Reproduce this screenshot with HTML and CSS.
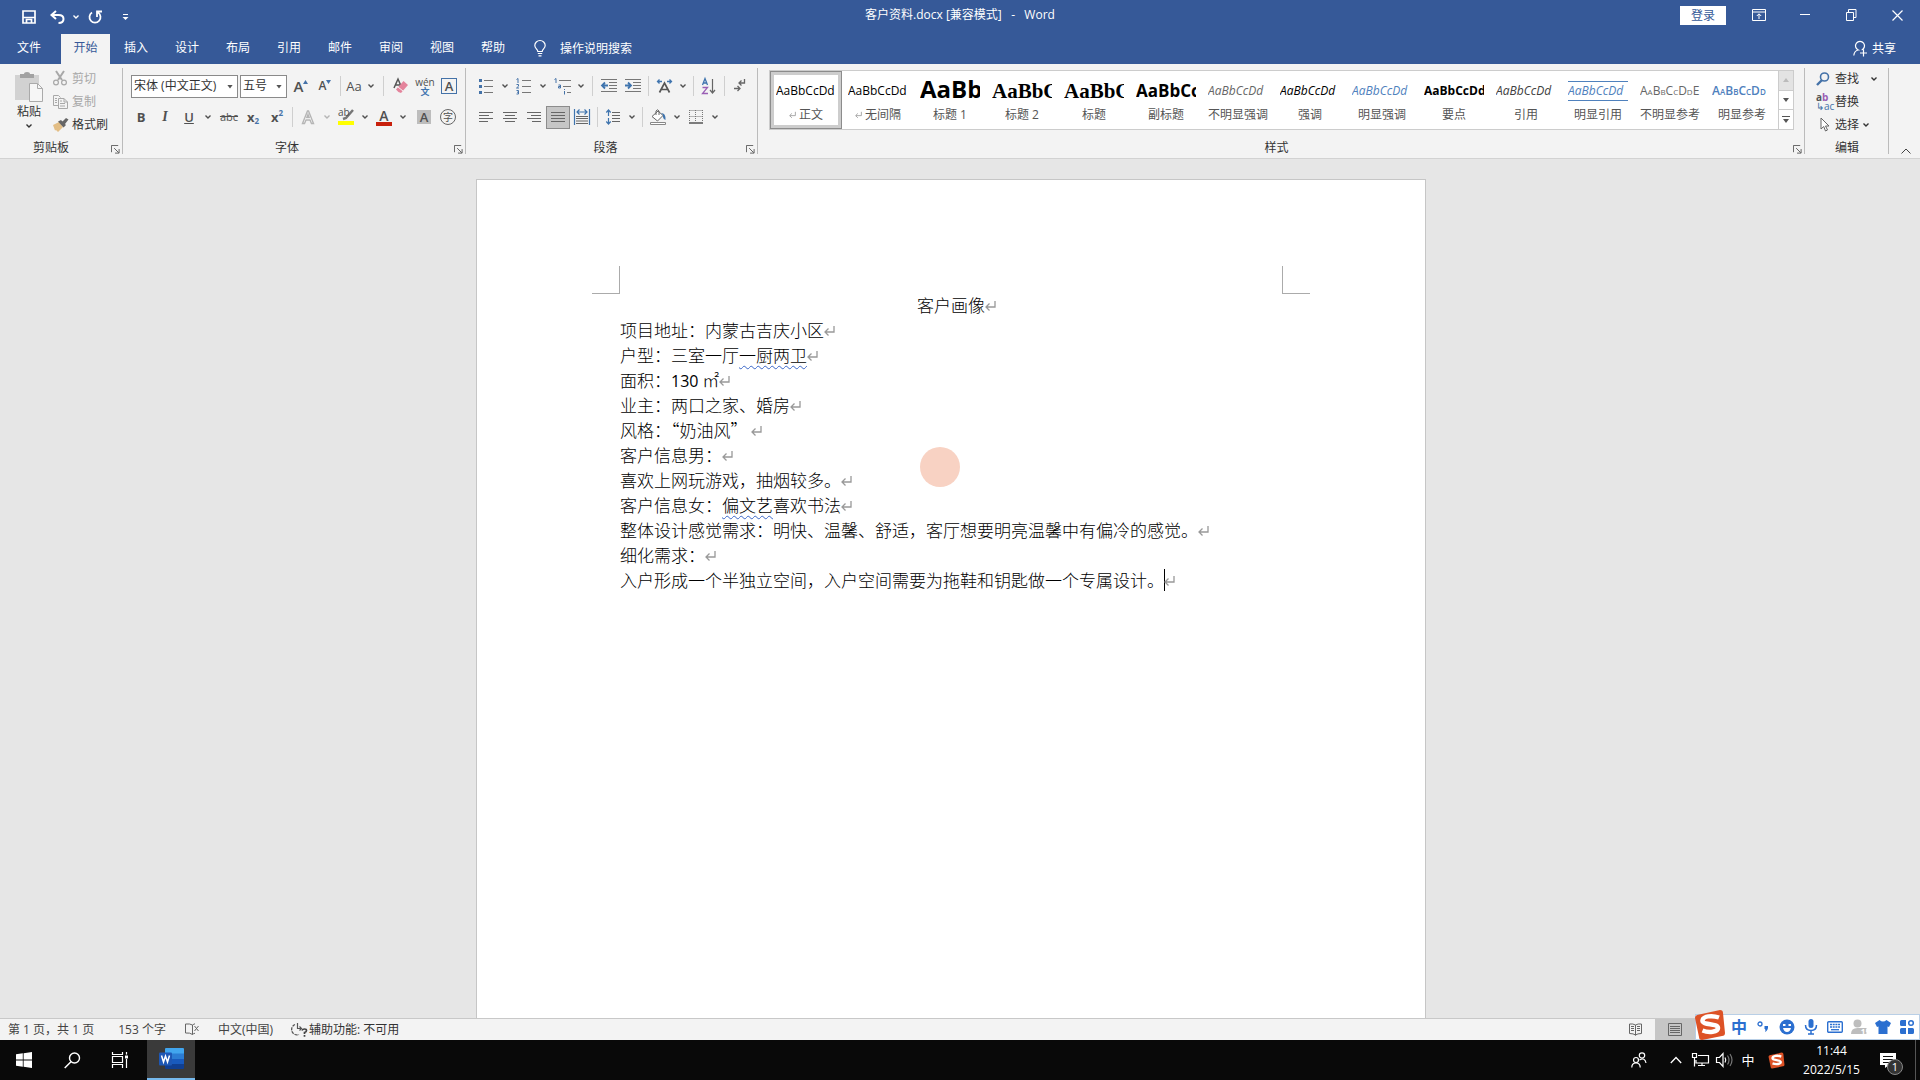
FILE: index.html
```
<!DOCTYPE html>
<html lang="zh-CN">
<head>
<meta charset="utf-8">
<title>客户资料.docx [兼容模式] - Word</title>
<link rel="stylesheet" href="styles.css">
</head>
<body>
<svg class="sprite" aria-hidden="true">
  <symbol id="chev" viewBox="0 0 8 8"><path d="M1.5 2.500 4 5l2.500-2.500" fill="none" stroke="currentColor" stroke-width="1.400"/></symbol>
  <symbol id="launch" viewBox="0 0 10 10"><path d="M.5 8V.5H8M3.500 3.500l5 5M9 4.500V9H4.500" fill="none" stroke="#555"/></symbol>
  <symbol id="ret" viewBox="0 0 11 12"><path d="M10 1v6H1.500M4.500 3.500 1 7l3.500 3.500" fill="none" stroke="#999" stroke-width="1.300"/></symbol>
  <symbol id="sogou" viewBox="0 0 32 32"><path d="M3 6 26 1q3 0 3 3l2 20q0 3-3 3L8 31q-3 0-3-3L1 9q0-2 2-3z" fill="#dd5226"/><path d="M25 8.500C18 6 9 7 8.500 11.500 8 16.500 24 14 24 19c0 4-9 5-15.500 2.500" fill="none" stroke="#fff" stroke-width="4.500"/></symbol>
</svg>
<div class="app">
<header class="titlebar">
  <div class="qat">
    <button class="q26" aria-label="保存"><svg width="14" height="14"><path d="M1 1h12v12H1z M1 7.500h12 M4.500 13V9.500h5V13" fill="none" stroke="#fff" stroke-width="1.700"/></svg></button>
    <button class="q26" aria-label="撤消"><svg width="15" height="14"><path d="M6 1 1.500 5 6 9M2 5h6.500c3 0 5 1.500 5 4s-2 4-5 4" fill="none" stroke="#fff" stroke-width="2"/></svg></button>
    <button class="q12" aria-label="撤消选项"><svg width="8" height="8"><use href="#chev"/></svg></button>
    <button class="q26" aria-label="重复"><svg width="14" height="14"><path d="M4 2.500a5.500 5.500 0 1 0 6 0M9 7V1.500h5" fill="none" stroke="#fff" stroke-width="1.800"/></svg></button>
    <button class="q32" aria-label="自定义快速访问工具栏"><svg width="7" height="8"><path d="M1 1.500h5" stroke="#fff"/><path d="M.5 4h6L3.500 7z" fill="#fff"/></svg></button>
  </div>
  <h1 class="doctitle">客户资料.docx [兼容模式]&nbsp;&nbsp; -&nbsp;&nbsp; Word</h1>
  <div class="wincontrols">
    <button class="login">登录</button>
    <button class="win" aria-label="功能区显示选项"><svg width="14" height="12"><path d="M.5.5h13v11H.5zM.5 3h13M7 10V5M4.800 7 7 4.800 9.200 7" fill="none" stroke="#fff"/></svg></button>
    <button class="win" aria-label="最小化"><svg width="10" height="10"><path d="M0 4.500h10" stroke="#fff"/></svg></button>
    <button class="win" aria-label="还原"><svg width="11" height="12"><path d="M.5 3.500h7v8h-7zM2.500 3V.5H10v8H8" fill="none" stroke="#fff"/></svg></button>
    <button class="win" aria-label="关闭"><svg width="11" height="11"><path d="M.5.5l10 10M10.500.5l-10 10" stroke="#fff" stroke-width="1.200"/></svg></button>
  </div>
</header>
<nav class="tabs">
  <button class="tab file">文件</button>
  <button class="tab active">开始</button>
  <button class="tab">插入</button>
  <button class="tab">设计</button>
  <button class="tab">布局</button>
  <button class="tab">引用</button>
  <button class="tab">邮件</button>
  <button class="tab">审阅</button>
  <button class="tab">视图</button>
  <button class="tab">帮助</button>
  <button class="tell"><svg width="12" height="17"><path d="M3.800 11.500C3.800 9 .8 8.500.8 5.500a5.200 5 0 0 1 10.400 0c0 3-3 3.500-3 6zM3.800 13.500h4.400M4.500 15.800h3" fill="none" stroke="#fff" stroke-width="1.200"/></svg>操作说明搜索</button>
  <button class="share"><svg width="14" height="17"><path d="M.8 15.500c.3-3 2-5 4.500-5.500a4.500 4.500 0 1 1 3.400 0M10.500 9.500v7M7 13h7" fill="none" stroke="#fff" stroke-width="1.200"/></svg>共享</button>
</nav>

<section class="ribbon">
  <div class="group clip">
    <div class="cliprow">
      <button class="paste">
        <svg width="28" height="31"><path d="M0 3h24v12h-8v13H0z" fill="#d2d2d2"/><path d="M5 5V2h4q0-2 3-2t3 2h4v4H5z" fill="#a2a2a2"/><path d="M14.500 11.500h8l5 5v13h-13z" fill="#f6f6f6" stroke="#aaa"/><path d="M22.500 11.500v5h5" fill="none" stroke="#aaa"/></svg>
        <span>粘贴</span>
        <svg width="8" height="8"><use href="#chev"/></svg>
      </button>
      <div class="cmds">
        <button class="cmd off"><svg width="14" height="15"><path d="M3 0l6 9M11 0 5 9" stroke="#a8a8a8" stroke-width="2"/><circle cx="3" cy="11.500" r="2.400" fill="none" stroke="#a8a8a8" stroke-width="1.200"/><circle cx="11" cy="11.500" r="2.400" fill="none" stroke="#a8a8a8" stroke-width="1.200"/></svg>剪切</button>
        <button class="cmd off"><svg width="15" height="14"><path d="M5 10.500H.5v-10h5l2 2M5.500 3.500h5.500l3.500 3.500v6.500h-9zM11 3.500V7h3.500M2 3.500h2M2 5.500h2M2 7.500h2M7 6h2M7 8.500h5M7 11h5" fill="none" stroke="#a8a8a8"/></svg>复制</button>
        <button class="cmd"><svg width="16" height="14"><path d="M0 7 6 4l4 5-5 5-2-2-1 .5z" fill="#e3be85"/><path d="M5 3.500 8 2l5 5-2.500 2.500zM9 4l4-4 2.500 1.500L12 6z" fill="#666"/></svg>格式刷</button>
      </div>
    </div>
    <div class="caption"><span>剪贴板</span><button class="launcher" aria-label="剪贴板设置"><svg width="9" height="9"><use href="#launch"/></svg></button></div>
  </div>

  <div class="group font">
    <div class="tools">
      <label class="combo wide"><select aria-label="字体"><option>宋体 (中文正文)</option></select></label>
      <label class="combo slim"><select aria-label="字号"><option>五号</option></select></label>
      <button class="ib big" aria-label="增大字号">A<svg width="5" height="14"><path d="M0 5 2.500 1 5 5z" fill="#4472a8"/></svg></button>
      <button class="ib med" aria-label="减小字号">A<svg width="5" height="14"><path d="M0 1h5L2.500 5z" fill="#4472a8"/></svg></button>
      <i class="sep"></i>
      <button class="ib20">Aa</button><button class="drop" aria-label="更改大小写选项"><svg width="8" height="8"><use href="#chev"/></svg></button>
      <i class="sep s11"></i>
      <button class="ib" aria-label="清除格式"><svg width="16" height="16"><path d="M1 10 5 1l3 7M2.500 7H7" fill="none" stroke="#555" stroke-width="1.500"/><path d="M3 11.500 10.500 3 15 7 8 15q-3-.5-5-3.500z" fill="#e4849c"/><path d="M5 9l5 4" stroke="#f4f4f4"/></svg></button>
      <button class="ib pinyin"><span>wén</span><b>文</b></button>
      <button class="ib" aria-label="字符边框"><span class="boxed">A</span></button>
    </div>
    <div class="tools">
      <button class="ib bold">B</button>
      <button class="ib ital">I</button>
      <button class="ib und">U</button><button class="drop" aria-label="下划线选项"><svg width="8" height="8"><use href="#chev"/></svg></button>
      <i class="gap2"></i>
      <button class="ib strike">abc</button>
      <button class="ib script">x<sub>2</sub></button>
      <button class="ib script">x<sup>2</sup></button>
      <i class="sep"></i>
      <button class="ib" aria-label="文本效果"><svg width="14" height="15"><path d="M1.500 13.500 6.500 1h1l5 12.500h-2L9 10H5l-1.500 3.500zM5.800 7.500h2.400L7 4.500z" fill="#fff" stroke="#b5b5b5" stroke-width="1.400"/></svg></button><button class="drop dim" aria-label="文本效果选项"><svg width="8" height="8"><use href="#chev"/></svg></button>
      <button class="ib mark"><span>ab</span><svg width="16" height="17"><path d="M15 1 8 9l-3 1" fill="none" stroke="#777" stroke-width="2.500"/><path d="M0 12h16v4H0z" fill="#ffff00"/></svg></button><button class="drop" aria-label="突出显示颜色"><svg width="8" height="8"><use href="#chev"/></svg></button>
      <button class="ib"><span class="redbar">A</span></button><button class="drop" aria-label="字体颜色选项"><svg width="8" height="8"><use href="#chev"/></svg></button>
      <i class="gap2"></i>
      <button class="ib"><span class="shaded">A</span></button>
      <button class="ib"><span class="ring">字</span></button>
    </div>
    <div class="caption"><span>字体</span><button class="launcher" aria-label="字体设置"><svg width="9" height="9"><use href="#launch"/></svg></button></div>
  </div>

  <div class="group para">
    <div class="tools">
      <button class="ib" aria-label="项目符号"><svg width="14" height="16"><path d="M5 2.500h9M5 8.500h9M5 14.500h9" stroke="#777"/><path d="M0 1h3v3H0zM0 7h3v3H0zM0 13h3v3H0z" fill="#4472a8"/></svg></button><button class="drop" aria-label="项目符号选项"><svg width="8" height="8"><use href="#chev"/></svg></button>
      <button class="ib" aria-label="编号"><svg width="16" height="17"><path d="M6 2.500h9M6 8.500h9M6 14.500h9" stroke="#777"/><path d="M.5 1.500 2 .5V5M.5 6.500h2v1.700L.5 10H3M.5 12.500h2V16h-2M1 14.200h1.500" fill="none" stroke="#4472a8"/></svg></button><button class="drop" aria-label="编号选项"><svg width="8" height="8"><use href="#chev"/></svg></button>
      <button class="ib" aria-label="多级列表"><svg width="17" height="17"><path d="M5 2.500h12M9 8.500h8M13 14.500h4" stroke="#777"/><path d="M.5 1.500 2 .5V5M4.500 7h2v3h-2V8.500h2M10.500 13v3.500M10.500 11v1" fill="none" stroke="#4472a8"/></svg></button><button class="drop" aria-label="多级列表选项"><svg width="8" height="8"><use href="#chev"/></svg></button>
      <i class="sep s9"></i>
      <button class="ib" aria-label="减少缩进"><svg width="16" height="14"><path d="M0 .5h16M8 3.500h8M8 6.500h8M8 9.500h8M0 12.500h16" stroke="#777"/><path d="M7 6.500H1M4 3.500 1 6.500l3 3" fill="none" stroke="#3f74ae" stroke-width="1.800"/></svg></button>
      <button class="ib" aria-label="增加缩进"><svg width="16" height="14"><path d="M0 .5h16M8 3.500h8M8 6.500h8M8 9.500h8M0 12.500h16" stroke="#777"/><path d="M0 6.500h6M3 3.500l3 3-3 3" fill="none" stroke="#3f74ae" stroke-width="1.800"/></svg></button>
      <i class="sep"></i>
      <button class="ib" aria-label="中文版式"><svg width="17" height="14"><path d="M3.500 13.500 8.500 4l5 9.500M5.500 10.500h6" fill="none" stroke="#555" stroke-width="1.700"/><path d="M6 2.500H1.500M3.500.5l-2 2 2 2M11 2.500h4.500M13.500.5l2 2-2 2" fill="none" stroke="#3f74ae" stroke-width="1.300"/></svg></button><button class="drop" aria-label="中文版式选项"><svg width="8" height="8"><use href="#chev"/></svg></button>
      <i class="sep"></i>
      <button class="ib" aria-label="排序"><svg width="14" height="17"><path d="M.5 7 3 .5 5.500 7M1.500 5h3" fill="none" stroke="#3f74ae" stroke-width="1.300"/><path d="M.5 9.500h5l-5 6H6" fill="none" stroke="#9a5fb5" stroke-width="1.300"/><path d="M10.500 1v14M8 12l2.500 3 2.500-3" fill="none" stroke="#666" stroke-width="1.200"/></svg></button>
      <i class="sep"></i>
      <button class="ib" aria-label="显示编辑标记"><svg width="12" height="14"><path d="M10.500 0v4H5M7.500 1.500 5 4l2.500 2.500M0 9.500h6M3.500 7 6 9.500 3.500 12" fill="none" stroke="#666" stroke-width="1.300"/></svg></button>
    </div>
    <div class="tools">
      <button class="ib" aria-label="左对齐"><svg width="14" height="12"><path d="M0 1.500h14M0 4.500h10M0 7.500h14M0 10.500h9" stroke="#666"/></svg></button>
      <button class="ib" aria-label="居中"><svg width="14" height="12"><path d="M0 1.500h14M2 4.500h10M0 7.500h14M2 10.500h10" stroke="#666"/></svg></button>
      <button class="ib" aria-label="右对齐"><svg width="14" height="12"><path d="M0 1.500h14M4 4.500h10M0 7.500h14M5 10.500h9" stroke="#666"/></svg></button>
      <button class="ib on" aria-label="两端对齐"><svg width="14" height="12"><path d="M0 1.500h14M0 4.500h14M0 7.500h14M0 10.500h14" stroke="#666"/></svg></button>
      <button class="ib" aria-label="分散对齐"><svg width="16" height="16"><path d="M2 7.500h12M2 9.500h12M2 12h12M2 14.500h12" stroke="#666"/><path d="M.5 0v16M15.500 0v16M3 3h10M5.500.5 3 3l2.500 2.500M10.500.5 13 3l-2.500 2.500" fill="none" stroke="#3f74ae" stroke-width="1.200"/></svg></button>
      <i class="sep"></i>
      <button class="ib" aria-label="行距"><svg width="14" height="16"><path d="M6 3.500h8M6 6.500h8M6 9.500h8M6 12.500h8" stroke="#666"/><path d="M2.500 7V1M.3 3.500 2.500 1l2.200 2.500M2.500 9v6M.3 12.500 2.500 15l2.200-2.500" fill="none" stroke="#3f74ae" stroke-width="1.200"/></svg></button><button class="drop" aria-label="行距选项"><svg width="8" height="8"><use href="#chev"/></svg></button>
      <i class="sep"></i>
      <button class="ib" aria-label="底纹"><svg width="16" height="16"><path d="M2 7.500 8 2l5 4.500L7.500 12z" fill="#fff" stroke="#666"/><path d="M6 6V2q1.500-2.500 3 0v4" fill="none" stroke="#666"/><path d="M11 4q5 0 4.500 7-3-1-2.500-5z" fill="#3f74ae"/><path d="M.5 13.500h15v2H.5z" fill="#fff" stroke="#888"/></svg></button><button class="drop" aria-label="底纹选项"><svg width="8" height="8"><use href="#chev"/></svg></button>
      <button class="ib" aria-label="边框"><svg width="14" height="14"><path d="M.5.5h13M.5 6.500h13M.5 0v12M6.500 0v12M13.500 0v12" stroke="#777" stroke-dasharray="1 1"/><path d="M0 13h14" stroke="#555" stroke-width="1.500"/></svg></button><button class="drop" aria-label="边框选项"><svg width="8" height="8"><use href="#chev"/></svg></button>
    </div>
    <div class="caption"><span>段落</span><button class="launcher" aria-label="段落设置"><svg width="9" height="9"><use href="#launch"/></svg></button></div>
  </div>

  <div class="group styles">
    <div class="gallery">
      <button class="style sel"><span class="smp">AaBbCcDd</span><span class="nm"><svg width="7" height="8"><use href="#ret"/></svg>正文</span></button>
      <button class="style"><span class="smp">AaBbCcDd</span><span class="nm"><svg width="7" height="8"><use href="#ret"/></svg>无间隔</span></button>
      <button class="style"><span class="smp h1">AaBb</span><span class="nm">标题 1</span></button>
      <button class="style"><span class="smp h2">AaBbC</span><span class="nm">标题 2</span></button>
      <button class="style"><span class="smp h2">AaBbC</span><span class="nm">标题</span></button>
      <button class="style"><span class="smp h3">AaBbCc</span><span class="nm">副标题</span></button>
      <button class="style"><span class="smp it grey">AaBbCcDd</span><span class="nm">不明显强调</span></button>
      <button class="style"><span class="smp it">AaBbCcDd</span><span class="nm">强调</span></button>
      <button class="style"><span class="smp it blue">AaBbCcDd</span><span class="nm">明显强调</span></button>
      <button class="style"><span class="smp strong">AaBbCcDd</span><span class="nm">要点</span></button>
      <button class="style"><span class="smp it dark">AaBbCcDd</span><span class="nm">引用</span></button>
      <button class="style"><span class="smp it blue lined">AaBbCcDd</span><span class="nm">明显引用</span></button>
      <button class="style"><span class="smp caps grey">AaBbCcDdE</span><span class="nm">不明显参考</span></button>
      <button class="style"><span class="smp caps blue semi">AaBbCcDd</span><span class="nm">明显参考</span></button>
      <div class="scroller">
        <button disabled aria-label="上一行"><svg width="6" height="4"><path d="M0 4 3 0l3 4z" fill="#bbb"/></svg></button>
        <button aria-label="下一行"><svg width="6" height="4"><path d="M0 0h6L3 4z" fill="#555"/></svg></button>
        <button aria-label="其他样式"><svg width="8" height="8"><path d="M0 .5h8" stroke="#555"/><path d="M1 3h6L4 7z" fill="#555"/></svg></button>
      </div>
    </div>
    <div class="caption"><span>样式</span><button class="launcher" aria-label="样式设置"><svg width="9" height="9"><use href="#launch"/></svg></button></div>
  </div>

  <div class="group edit">
    <div class="cmds">
      <button class="cmd"><svg width="16" height="14"><circle cx="8.500" cy="5" r="4" fill="none" stroke="#4472a8" stroke-width="1.600"/><path d="M6 8 1 13" stroke="#4472a8" stroke-width="2.400"/></svg>查找<svg class="far" width="8" height="8"><use href="#chev"/></svg></button>
      <button class="cmd"><span class="swap"><b>a<i>b</i></b><em>↳ac</em></span>替换</button>
      <button class="cmd"><svg width="16" height="15"><path d="M5 1v11l2.700-2.500L9.500 14l2-1-2-4H13z" fill="#fff" stroke="#666"/></svg>选择<svg width="8" height="8"><use href="#chev"/></svg></button>
    </div>
    <div class="caption"><span>编辑</span></div>
  </div>
  <button class="collapse" aria-label="折叠功能区"><svg width="10" height="6"><path d="M.5 5.500 5 1l4.500 4.500" fill="none" stroke="#444"/></svg></button>
</section>

<main class="desk">
  <article class="page">
    <div class="corners"><i class="cl"></i><i class="cr"></i></div>
    <div class="body">
      <p class="mid">客户画像<svg class="ret" width="11" height="12"><use href="#ret"/></svg></p>
      <p>项目地址：内蒙古吉庆小区<svg class="ret" width="11" height="12"><use href="#ret"/></svg></p>
      <p>户型：三室一厅<span class="wavy">一厨两卫</span><svg class="ret" width="11" height="12"><use href="#ret"/></svg></p>
      <p>面积：<span class="num">130</span> ㎡<svg class="ret" width="11" height="12"><use href="#ret"/></svg></p>
      <p>业主：两口之家、婚房<svg class="ret" width="11" height="12"><use href="#ret"/></svg></p>
      <p>风格：“奶油风” <svg class="ret" width="11" height="12"><use href="#ret"/></svg></p>
      <p>客户信息男：<svg class="ret" width="11" height="12"><use href="#ret"/></svg></p>
      <p>喜欢上网玩游戏，抽烟较多。<svg class="ret" width="11" height="12"><use href="#ret"/></svg></p>
      <p>客户信息女：<span class="wavy">偏文艺</span>喜欢书法<svg class="ret" width="11" height="12"><use href="#ret"/></svg></p>
      <p>整体设计感觉需求：明快、温馨、舒适，客厅想要明亮温馨中有偏冷的感觉。<svg class="ret" width="11" height="12"><use href="#ret"/></svg></p>
      <p>细化需求：<svg class="ret" width="11" height="12"><use href="#ret"/></svg></p>
      <p>入户形成一个半独立空间，入户空间需要为拖鞋和钥匙做一个专属设计。<i class="caret"></i><svg class="ret" width="11" height="12"><use href="#ret"/></svg></p>
    </div>
    <i class="pointer"></i>
  </article>
</main>

<footer class="status">
  <span class="pages">第 1 页，共 1 页</span>
  <span class="words">153 个字</span>
  <button class="proof" aria-label="校对"><svg width="15" height="13"><path d="M7.500 2v9.500M7.500 2Q5 .5.500 1v9q4.500-.5 7 1.500 1-1 2.500-1.300M7.500 2Q9 1 10 .8M9.500 3l4 5M13.500 3l-4 5" fill="none" stroke="#666"/></svg></button>
  <span class="lang">中文(中国)</span>
  <button class="a11y"><svg width="17" height="14"><path d="M4 1.500a5 5 0 1 0 4 10" fill="none" stroke="#555" stroke-width="1.300" stroke-dasharray="3 1"/><path d="M6.500 0v5.500h4M8.500 3.500l2 2-2 2" fill="none" stroke="#555" stroke-width="1.200"/><path d="M11 7.500q.5-1.500 2.500-1.500 2 0 2 1.500t-2 2v1.500M13.500 12v1.800" fill="none" stroke="#444" stroke-width="1.700"/></svg>辅助功能: 不可用</button>
  <div class="views">
    <button aria-label="阅读视图"><svg width="13" height="13"><path d="M6.500 2v10.500M6.500 2Q4 .5.500 1v9.500q4 0 6 1.500 2-1.500 6-1.500V1Q9 .5 6.500 2zM2 3.500h3M2 5.500h3M2 7.500h3M8 3.500h3M8 5.500h3M8 7.500h3" fill="none" stroke="#666"/></svg></button>
    <button class="cur" aria-label="页面视图"><svg width="14" height="13"><path d="M.5.5h13v12H.5zM2 3.500h10M2 5.500h10M2 7.500h10M2 9.500h10" fill="none" stroke="#666"/></svg></button>
  </div>
  <div class="ime">
    <button class="logo" aria-label="搜狗输入法"><svg width="32" height="32"><use href="#sogou"/></svg></button>
    <button class="zh">中</button>
    <button aria-label="标点"><svg width="14" height="14"><circle cx="4" cy="4" r="2" fill="none" stroke="#2b6fd0" stroke-width="1.300"/><path d="M8.500 6h3.500q.5 4-3 6 1-2 0-3h-.5z" fill="#2b6fd0"/></svg></button>
    <button aria-label="表情"><svg width="16" height="16"><circle cx="8" cy="8" r="7.500" fill="#2b6fd0"/><path d="M4 5h2.500v2H4zM9.500 5H12v2H9.500zM4 9h8q-1 4-4 4t-4-4z" fill="#fff"/></svg></button>
    <button aria-label="语音"><svg width="14" height="16"><rect x="4.500" y="0" width="5" height="9" rx="2.500" fill="#2b6fd0"/><path d="M1.500 6q0 5.500 5.500 5.500T12.500 6M7 11.500v3M4 15h6" fill="none" stroke="#2b6fd0" stroke-width="1.500"/></svg></button>
    <button aria-label="软键盘"><svg width="16" height="12"><rect x=".7" y=".7" width="14.600" height="10.600" rx="1" fill="none" stroke="#2b6fd0" stroke-width="1.400"/><path d="M3 3.500h10M3 6h10" stroke="#2b6fd0" stroke-width="1.500" stroke-dasharray="2 .7"/><path d="M4 8.700h8" stroke="#2b6fd0" stroke-width="1.300"/></svg></button>
    <button class="person" aria-label="账户"><svg width="16" height="16"><circle cx="6.500" cy="4.500" r="4" fill="#bdbdbd"/><path d="M0 15q0-6 6.500-6h9v6z" fill="#bdbdbd"/></svg><small>15</small></button>
    <button aria-label="皮肤"><svg width="16" height="14"><path d="M4.500 0q3.500 3 7 0L16 3l-2 4-1.500-.5V14h-9V6.500L2 7 0 3z" fill="#2b6fd0"/></svg></button>
    <button aria-label="工具箱"><svg width="14" height="14"><path d="M0 1.500Q0 0 1.500 0H6v6H1.500Q0 6 0 4.500zM0 9.500Q0 8 1.500 8H6v6H1.500Q0 14 0 12.500zM8 8h4.500Q14 8 14 9.500v3q0 1.500-1.500 1.500H8z" fill="#2b6fd0"/><circle cx="11" cy="3" r="2.300" fill="none" stroke="#2b6fd0" stroke-width="1.500"/></svg></button>
  </div>
</footer>

<nav class="taskbar">
  <button class="tk" aria-label="开始菜单"><svg width="16" height="16"><path d="M0 2.200 6.800 1.300v6.200H0zM7.600 1.200 16 0v7.500H7.600zM0 8.500h6.800v6.200L0 13.800zM7.600 8.500H16V16l-8.400-1.200z" fill="#fff"/></svg></button>
  <button class="tk" aria-label="搜索"><svg width="17" height="17"><circle cx="10.500" cy="6" r="5" fill="none" stroke="#fff" stroke-width="1.400"/><path d="M7 9.700.7 16" stroke="#fff" stroke-width="1.500"/></svg></button>
  <button class="tk" aria-label="任务视图"><svg width="16" height="16"><path d="M.5 0v2.500h10V0M.5 4.500h10v6H.5zM.5 16v-3.500h10V16M14.500 0v2.500M14.500 7v9" fill="none" stroke="#fff" stroke-width="1.200"/><path d="M13 3.500h3v3h-3z" fill="#fff"/></svg></button>
  <button class="tk word" aria-label="Word"><svg width="25" height="22"><path d="M6 1q0-1 1-1h17q1 0 1 1v5H6z" fill="#41a5ee"/><path d="M6 5.500h19V11H6z" fill="#2b7cd3"/><path d="M6 11h19v5.500H6z" fill="#185abd"/><path d="M6 16h19v4q0 1-1 1H7q-1 0-1-1z" fill="#103f91"/><rect x="0" y="4.500" width="13" height="13" rx="1" fill="#1d57b5"/><path d="M2.500 7.500 4.500 14l2-6 2 6 2-6.500" fill="none" stroke="#fff" stroke-width="1.500"/></svg></button>
  <div class="tray">
    <button class="t40" aria-label="人脉"><svg width="16" height="16"><circle cx="11" cy="3.500" r="2.700" fill="none" stroke="#fff" stroke-width="1.200"/><circle cx="5" cy="8" r="2.500" fill="none" stroke="#fff" stroke-width="1.200"/><path d="M.8 15.500q0-4.500 4.200-4.500t4.200 4.500M8.500 8q5.500-3 6.500 3" fill="none" stroke="#fff" stroke-width="1.200"/></svg></button>
    <button class="t24" aria-label="显示隐藏的图标"><svg width="12" height="8"><path d="M.8 7 6 1.500 11.200 7" fill="none" stroke="#fff" stroke-width="1.300"/></svg></button>
    <button class="t24" aria-label="网络"><svg width="17" height="14"><path d="M6 2.500h10.500v7.500H4V7M.5.5h4v4h-4zM2.500 4.500v9M6 12.500h7M10 10v2.500" fill="none" stroke="#fff" stroke-width="1.200"/></svg></button>
    <button class="t24" aria-label="音量"><svg width="17" height="14"><path d="M.5 4.500h3l3.500-4v13l-3.500-4h-3zM9 4.500q1.500 2.500 0 5" fill="none" stroke="#fff" stroke-width="1.200"/><path d="M11.500 2.500q3 4.500 0 9M14 1q4 6 0 12" fill="none" stroke="#777" stroke-width="1.200"/></svg></button>
    <button class="t24 cn">中</button>
    <button class="t32" aria-label="搜狗"><svg width="17" height="17"><use href="#sogou"/></svg></button>
    <button class="clock"><span>11:44</span><span>2022/5/15</span></button>
    <button class="note" aria-label="通知"><svg width="16" height="15"><path d="M0 0h16v12H9l-4 3v-3H0z" fill="#fff"/><path d="M3 3.500h10M3 6.500h10M3 9.500h6" stroke="#111"/></svg><span class="badge">1</span></button>
  </div>
</nav>
</div>
</body>
</html>
```
FILE: styles.css
```
* { box-sizing: border-box; }
html, body { height: 100%; margin: 0; }
body {
  font-family: "Open Sans", "Noto Sans CJK SC", sans-serif;
  font-size: 12px;
  line-height: 16px;
  color: #333;
  overflow: hidden;
}
button, select {
  font: inherit;
  color: inherit;
  background: none;
  border: 0;
  padding: 0;
  margin: 0;
}
button {
  display: flex;
  align-items: center;
  justify-content: center;
  white-space: nowrap;
}
svg { display: block; flex: none; overflow: visible; }
.sprite { position: absolute; width: 0; height: 0; }
.app { display: flex; flex-direction: column; height: 100vh; }

/* title bar */
.titlebar {
  display: grid;
  grid-template-columns: 1fr auto 1fr;
  height: 34px;
  flex: none;
  background: #365998;
  color: #fff;
}
.qat { display: flex; align-items: center; padding-left: 15px; }
.q26 { width: 28px; height: 28px; }
.q12 { width: 10px; height: 28px; }
.q32 { width: 32px; height: 28px; }
.doctitle { margin: 0; padding-top: 7px; font-size: 12px; font-weight: 400; line-height: 16px; }
.wincontrols { display: flex; justify-content: flex-end; align-items: flex-start; }
.login { width: 46px; height: 19px; margin: 6px 10px 0 0; background: #fff; color: #365998; }
.win { width: 46px; height: 30px; }

/* tabs */
.tabs { display: flex; height: 30px; flex: none; background: #365998; color: #fff; }
.tab { width: 51px; padding: 0 3px 2px 0; }
.tab.file { width: 61px; padding-right: 3px; }
.tab.active { width: 49px; margin-right: 2px; padding-right: 0; background: #f3f3f3; color: #365998; }
.tell { gap: 14px; margin-left: 14px; padding-bottom: 1px; }
.share { gap: 5px; margin-left: auto; margin-right: 24px; padding-bottom: 1px; }

/* ribbon */
.ribbon {
  display: flex;
  height: 95px;
  flex: none;
  background: #f3f3f3;
  border-bottom: 1px solid #d2d2d2;
}
.group { position: relative; display: flex; flex-direction: column; padding-top: 11px; gap: 9px; }
.group::after {
  content: "";
  position: absolute;
  right: 0; top: 4px; bottom: 4px;
  width: 1px;
  background: #bbb;
}
.caption { display: flex; margin-top: auto; height: 18px; color: #333; }
.caption span { flex: 1; text-align: center; padding-right: 6px; }
.launcher { width: 14px; height: 18px; margin-right: 1px; }
.tools { display: flex; align-items: center; height: 22px; }
.ib { width: 24px; height: 22px; color: #505050; }
.ib20 { width: 20px; height: 22px; color: #505050; font-size: 13px; }
.drop { width: 14px; height: 22px; color: #505050; }
.drop.dim { color: #b5b5b5; }
.sep { width: 7px; height: 20px; background: linear-gradient(#cfcfcf, #cfcfcf) center / 1px 100% no-repeat; }
.sep.s9 { width: 9px; }
.sep.s11 { width: 11px; }
.gap2 { width: 2px; }

.clip { width: 123px; padding-top: 3px; gap: 0; }
.cliprow { display: flex; }
.paste { flex-direction: column; width: 46px; margin: 0 1px 0 6px; height: 69px; justify-content: flex-start; padding-top: 5px; }
.paste span { line-height: 18px; }
.paste svg:last-child { margin-top: 1px; }
.cmds { display: flex; flex-direction: column; }
.cmd { height: 23px; gap: 3px; justify-content: flex-start; }
.cmd > svg:first-child { width: 16px; }
.cmd.off { color: #a8a8a8; }

.font { width: 343px; padding-left: 6px; }
.font .tools:first-child { padding-left: 2px; }
.combo { position: relative; display: flex; height: 23px; border: 1px solid #8a8a8a; background: #fff; }
.combo::after {
  content: "";
  position: absolute;
  right: 4px; top: 9px;
  width: 6px; height: 4px;
  background: #555;
  clip-path: polygon(0 0, 100% 0, 50% 100%);
  pointer-events: none;
}
.combo select { appearance: none; width: 100%; padding-left: 2px; outline: 0; }
.wide { width: 107px; }
.slim { width: 47px; margin: 0 2px; }
.big, .med { align-items: center; font-weight: 600; }
.big { font-size: 15px; }
.med { font-size: 12px; }
.pinyin { flex-direction: column; font-size: 10px; line-height: 10px; }
.pinyin b { font-size: 9px; line-height: 9px; color: #3f74ae; }
.boxed { width: 16px; height: 16px; border: 1px solid #4472a8; line-height: 14px; font-weight: 600; font-size: 13px; }
.bold { font-weight: 700; font-size: 13px; }
.ital { font: italic 700 14px "Liberation Serif", serif; }
.und { font-weight: 600; text-decoration: underline; font-size: 13px; }
.strike { text-decoration: line-through; font-size: 11px; }
.script { font-weight: 700; font-size: 13px; }
.script sub, .script sup { font-size: 8px; line-height: 8px; color: #4472a8; }
.script sub { align-self: flex-end; margin-bottom: 3px; }
.script sup { align-self: flex-start; margin-top: 3px; }
.mark { position: relative; }
.mark span { position: absolute; left: 4px; top: 0; font-size: 10px; line-height: 12px; }
.redbar { width: 16px; border-bottom: 4px solid #c8200c; font-size: 14px; font-weight: 600; line-height: 13px; }
.shaded { width: 14px; background: #bdbdbd; font-size: 13px; font-weight: 600; line-height: 14px; }
.ring { width: 16px; height: 16px; border: 1px solid #666; border-radius: 50%; font-size: 10px; line-height: 14px; }

.para { width: 292px; padding-left: 8px; }
.ib.on { height: 23px; background: #c6c6c6; border: 1px solid #8c8c8c; }

.styles { flex: 1; min-width: 0; padding: 6px 0 0 11px; }
.gallery { display: flex; height: 60px; margin-right: 11px; border: 1px solid #ccc; background: #fff; }
.style { flex: 1 1 72px; min-width: 0; flex-direction: column; justify-content: flex-start; padding-top: 7px; }
.style.sel { border: 1px solid #8c8c8c; box-shadow: inset 0 0 0 3px #cdcdcd; padding-top: 6px; }
.smp { width: 60px; height: 26px; line-height: 26px; overflow: hidden; text-align: left; color: #000; }
.nm { display: flex; align-items: center; gap: 3px; height: 22px; color: #555; }
.smp.h1 { font-size: 24px; font-weight: 700; line-height: 22px; }
.smp.h2 { font: 700 21px/26px "Liberation Serif", serif; }
.smp.h3 { font-size: 17px; font-weight: 700; }
.smp.it { font-style: italic; }
.smp.grey { color: #666; }
.smp.dark { color: #404040; }
.smp.blue { color: #4f81bd; }
.smp.strong { font-weight: 700; }
.smp.lined { height: 20px; line-height: 18px; margin: 3px 0; border: solid #4f81bd; border-width: 1px 0; }
.smp.caps { font-variant: small-caps; }
.smp.semi { font-weight: 600; }
.scroller { display: flex; flex-direction: column; width: 15px; border-left: 1px solid #ccc; }
.scroller button { flex: 1; border-bottom: 1px solid #ccc; }
.scroller button:last-child { border-bottom: 0; }
.scroller button:disabled { background: #e3e3e3; }

.edit { width: 84px; padding: 3px 0 0 11px; gap: 0; }
.edit .caption span { padding-right: 11px; }
.far { margin-left: 8px; }
.swap { width: 16px; font-size: 10px; line-height: 9px; text-align: left; color: #4472a8; }
.swap b, .swap em { display: block; font-style: normal; }
.swap b { color: #555; }
.swap i { font-style: normal; color: #9a5fb5; }
.collapse { flex: none; width: 31px; align-items: flex-end; padding: 0 0 4px 3px; }

/* document */
.desk {
  display: flex;
  justify-content: center;
  flex: 1;
  min-height: 0;
  padding: 20px 18px 0 0;
  background: #e6e6e6;
  overflow: hidden;
}
.page {
  position: relative;
  width: 950px;
  padding-top: 86px;
  background: #fff;
  border: 1px solid #c6c6c6;
  border-bottom: 0;
}
.corners { display: flex; justify-content: space-between; height: 26px; padding: 0 115px; }
.corners i { width: 28px; height: 28px; border: 0 solid #ababab; border-bottom-width: 1px; }
.corners .cl { border-right-width: 1px; }
.corners .cr { border-left-width: 1px; }
.body {
  padding: 0 143px;
  font-family: "Noto Sans CJK SC", sans-serif;
  font-weight: 300;
  font-size: 17px;
  line-height: 25px;
  color: #000;
}
.body p { display: flex; align-items: baseline; height: 25px; margin: 0; white-space: pre; }
.body .mid { justify-content: center; }
.mid .ret { margin-right: -11px; }
.num { font-family: "Open Sans", sans-serif; font-size: 16px; font-weight: 400; }
.wavy { text-decoration: underline wavy #3a66c8 1px; text-underline-offset: 3px; }
.caret { align-self: center; width: 1px; height: 22px; margin-right: -1px; background: #000; }
.pointer {
  position: absolute;
  left: 443px; top: 267px;
  width: 40px; height: 40px;
  border-radius: 50%;
  background: #f8d2c3;
}

/* status bar */
.status {
  position: relative;
  display: flex;
  align-items: center;
  height: 22px;
  flex: none;
  padding-left: 8px;
  background: #f3f3f3;
  border-top: 1px solid #c8c8c8;
  color: #444;
}
.words { margin-left: 24px; }
.proof { margin-left: 19px; }
.lang { margin-left: 18px; }
.a11y { margin-left: 18px; gap: 1px; color: #333; }
.views { display: flex; align-self: stretch; margin-left: auto; margin-right: 225px; }
.views button { width: 40px; }
.views .cur { background: #c6c6c6; }
.ime {
  position: absolute;
  right: 0; bottom: 0;
  display: flex;
  align-items: center;
  width: 225px; height: 26px;
  background: #fff;
  border: 1px solid #b9cfe6;
  color: #2b6fd0;
}
.ime button { width: 24px; height: 24px; position: relative; }
.ime .logo { width: 32px; margin: 0 1px 4px -2px; }
.ime .zh { font-size: 16px; font-weight: 700; }
.person small { position: absolute; right: 1px; bottom: 3px; font-size: 8px; line-height: 8px; font-weight: 700; color: #fff; }

/* taskbar */
.taskbar { display: flex; height: 40px; flex: none; background: #090909; color: #fff; }
.tk { width: 48px; }
.tk.word { margin-left: 3px; background: #3a3a3a; border-bottom: 2px solid #76b9ed; }
.tray { display: flex; margin-left: auto; margin-right: 4px; border-right: 1px solid #555; }
.t40 { width: 46px; padding-right: 4px; }
.t24 { width: 24px; }
.t32 { width: 32px; }
.cn { font-size: 13px; }
.clock { flex-direction: column; width: 79px; line-height: 19px; }
.note { position: relative; width: 44px; padding: 0 10px 0 0; }
.badge {
  position: absolute;
  right: 12px; bottom: 5px;
  width: 16px; height: 16px;
  border: 1px solid #888;
  border-radius: 50%;
  background: #333;
  font-size: 11px;
  line-height: 14px;
}
```
